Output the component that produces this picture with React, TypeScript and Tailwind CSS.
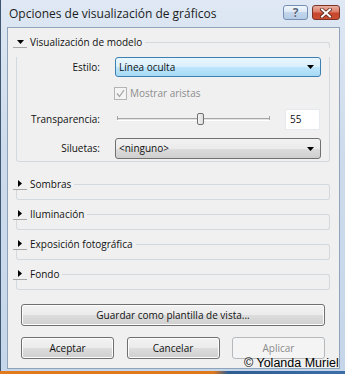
import React from "react";

function Tri({ down }: { down?: boolean }) {
  return down ? (
    <svg width="7" height="4" viewBox="0 0 7 4"><path d="M0 0H7L3.5 4Z" fill="#000" /></svg>
  ) : (
    <svg width="4" height="7" viewBox="0 0 4 7"><path d="M0 0V7L4 3.5Z" fill="#000" /></svg>
  );
}

function Header({ label, down }: { label: string; down?: boolean }) {
  return (
    <div className="flex h-[12px] items-start">
      <div className="-ml-[3px] w-[14px] h-[12px] border-b border-[#a7a7a7] flex items-center justify-center">
        <Tri down={down} />
      </div>
      <span className="ml-[3px] text-[10px] leading-[12px] text-[#111] whitespace-nowrap">{label}</span>
      <div className="flex-1 ml-[3px] mt-[6px] h-[6px] border-t border-r border-[#d3d9dd] rounded-tr-[3px]" />
    </div>
  );
}

function Collapsed({ label }: { label: string }) {
  return (
    <div className="mt-[8px]">
      <Header label={label} />
      <div className="h-[10px] border-x border-b border-[#d3d9dd] rounded-b-[3px]" />
    </div>
  );
}

function Btn({ children, disabled, className = "" }: { children: React.ReactNode; disabled?: boolean; className?: string }) {
  return (
    <div
      className={
        "h-[22px] rounded-[3px] border flex items-center justify-center text-[10px] " +
        (disabled
          ? "border-[#b5b9bc] bg-[#f4f4f4] text-[#8a8a8a] "
          : "border-[#707070] bg-[linear-gradient(180deg,#f2f2f2_0%,#ebebeb_50%,#dddddd_50%,#cfcfcf_100%)] text-[#111] shadow-[inset_0_0_0_1px_#fcfcfc] ") +
        className
      }
    >
      {children}
    </div>
  );
}

export default function App() {
  return (
    <div className="relative w-[345px] h-[374px] overflow-hidden bg-[linear-gradient(90deg,#e27a1e_0%,#e0781c_62%,#2f5d92_66%,#3c6ea8_100%)] font-['Open_Sans',sans-serif]">
      <div className="w-[345px] h-[371px] border-l border-[#3f5670] bg-[linear-gradient(180deg,#dfe8f4_0%,#cddbec_40%,#c6d6ea_100%)] flex flex-col">
        {/* title bar */}
        <div className="h-[27px] flex items-start shrink-0">
          <span className="ml-[8px] mt-[6px] text-[12px] leading-[16px] text-[#1c1c1c] whitespace-nowrap">
            Opciones de visualización de gráficos
          </span>
          <div className="ml-auto mt-[5px] flex">
            <div className="w-[25px] h-[15px] rounded-[3px] border border-[#7590b3] bg-[linear-gradient(180deg,#f1f6fc_0%,#dce8f5_50%,#c3d6ec_50%,#b5cce6_100%)] flex items-center justify-center">
              <span className="text-[12px] leading-[12px] font-bold text-[#5a6a80] [text-shadow:0_0_1px_#fff]">?</span>
            </div>
            <div className="ml-[4px] mr-[5px] w-[28px] h-[15px] rounded-[3px] border border-[#7a3326] bg-[linear-gradient(180deg,#eab1a2_0%,#dc7c66_45%,#c8472d_55%,#c94e32_100%)] flex items-center justify-center">
              <svg width="12" height="10" viewBox="0 0 12 10">
                <path d="M2 1.5L10 8.5M10 1.5L2 8.5" stroke="#5a2116" strokeWidth="3.6" strokeLinecap="square" />
                <path d="M2 1.5L10 8.5M10 1.5L2 8.5" stroke="#fff" strokeWidth="2" strokeLinecap="square" />
              </svg>
            </div>
          </div>
        </div>

        {/* content */}
        <div className="ml-[6px] mr-[5px] mb-[2px] flex-1 border border-[#8fa3bb] bg-[#f0f0f0] pt-[8px] pl-[8px] pr-[9px] flex flex-col">
          {/* expanded group */}
          <div>
            <Header label="Visualización de modelo" down />
            <div className="border-x border-b border-[#d3d9dd] rounded-b-[3px] pb-[2px] text-[10px] text-[#111]">
              <div className="mt-[9px] flex items-center h-[20px] pr-[8px]">
                <span className="w-[83px] text-right shrink-0">Estilo:</span>
                <div className="ml-[15px] flex-1 h-[20px] rounded-[3px] border border-[#3c7fb1] bg-[linear-gradient(180deg,#eaf6fd_0%,#d9f0fc_50%,#bee6fd_50%,#a7d9f5_100%)] flex items-center pl-[3px] pr-[6px]">
                  <span className="flex-1">Línea oculta</span>
                  <Tri down />
                </div>
              </div>
              <div className="mt-[10px] h-[13px] flex items-center ml-[97px]">
                <div className="w-[13px] h-[13px] border border-[#b4b4b4] bg-[#f4f4f4] flex items-center justify-center">
                  <svg width="9" height="9" viewBox="0 0 9 9"><path d="M1 4.5L3.5 7.5L8 1" stroke="#a6a6a6" strokeWidth="1.3" fill="none" /></svg>
                </div>
                <span className="ml-[3px] text-[#8d8d8d]">Mostrar aristas</span>
              </div>
              <div className="mt-[9px] h-[21px] flex items-center pr-[9px]">
                <span className="w-[83px] text-right shrink-0">Transparencia:</span>
                <div className="ml-[15px] flex-1 h-[21px] flex items-center">
                  <div className="relative flex-1 mx-[2px] h-[3px] border-t border-[#a6a6a6] border-b border-b-[#ffffff] bg-[#e3e3e3]">
                    <div className="absolute left-0 -top-[3px] w-px h-[4px] bg-[#a6a6a6]" />
                    <div className="absolute right-0 -top-[3px] w-px h-[4px] bg-[#a6a6a6]" />
                    <div className="absolute left-[80px] -top-[6px] w-[7px] h-[12px] rounded-[2px] border border-[#707070] bg-[linear-gradient(90deg,#f4f4f4,#dcdcdc)]" />
                  </div>
                </div>
                <div className="ml-[13px] w-[35px] h-[21px] bg-white border border-[#e6eaee] flex items-center pl-[4px]">55</div>
              </div>
              <div className="mt-[8px] h-[21px] flex items-center pr-[8px]">
                <span className="w-[83px] text-right shrink-0">Siluetas:</span>
                <div className="ml-[15px] flex-1 h-[21px] rounded-[3px] border border-[#707070] bg-[linear-gradient(180deg,#f2f2f2_0%,#ebebeb_50%,#dddddd_50%,#cfcfcf_100%)] flex items-center pl-[3px] pr-[6px]">
                  <span className="flex-1">&lt;ninguno&gt;</span>
                  <Tri down />
                </div>
              </div>
            </div>
          </div>

          <div className="mt-[8px]">
            <Collapsed label="Sombras" />
            <Collapsed label="Iluminación" />
            <Collapsed label="Exposición fotográfica" />
            <Collapsed label="Fondo" />
          </div>

          <div className="ml-[5px] mr-[5px] mt-[14px]">
            <Btn>Guardar como plantilla de vista...</Btn>
            <div className="mt-[11px] flex justify-between">
              <Btn className="w-[93px]">Aceptar</Btn>
              <Btn className="w-[93px]">Cancelar</Btn>
              <Btn className="w-[93px]" disabled>Aplicar</Btn>
            </div>
          </div>
        </div>
      </div>
      <span className="absolute left-[244px] top-[356px] text-[12.5px] leading-[14px] text-black font-['Liberation_Sans',Arial,sans-serif] whitespace-nowrap">
        © Yolanda Muriel
      </span>
    </div>
  );
}
